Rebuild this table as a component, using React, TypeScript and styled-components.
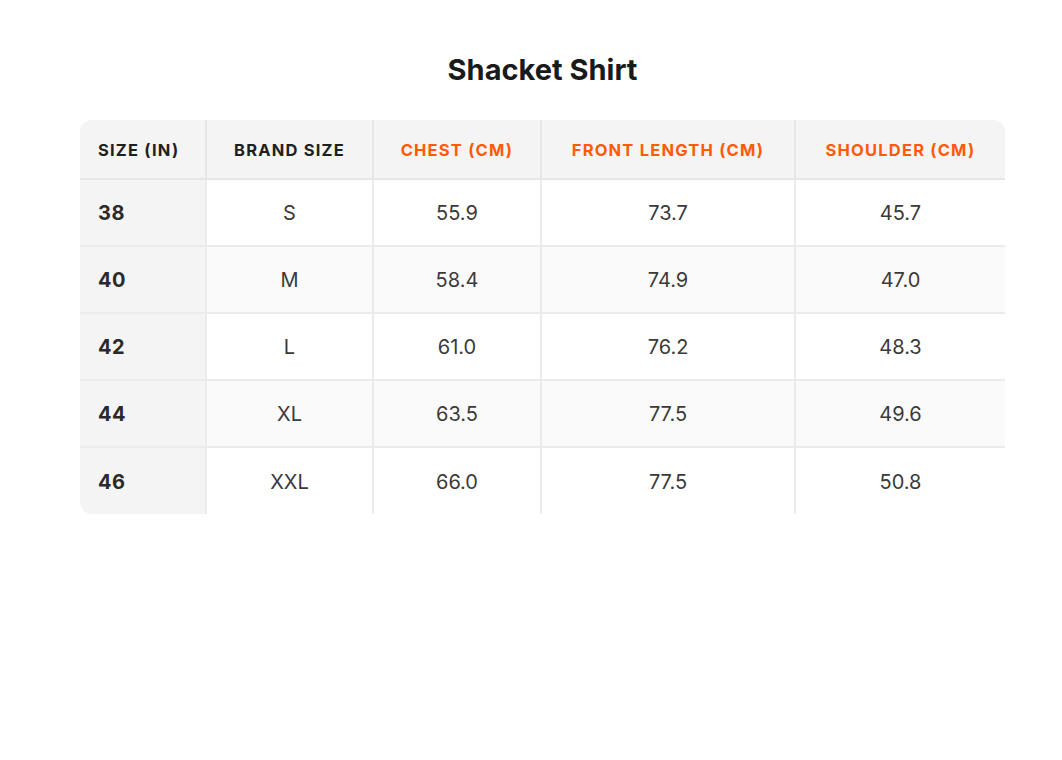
import React from 'react';
import styled, { createGlobalStyle } from 'styled-components';

const GlobalStyle = createGlobalStyle`
  body {
    margin: 0;
    background: #fff;
    font-family: Inter, "Liberation Sans", sans-serif;
  }
`;

const columns = [
  { label: 'Size (in)', accent: false },
  { label: 'Brand size', accent: false },
  { label: 'Chest (cm)', accent: true },
  { label: 'Front length (cm)', accent: true },
  { label: 'Shoulder (cm)', accent: true },
];

const rows = [
  ['38', 'S', '55.9', '73.7', '45.7'],
  ['40', 'M', '58.4', '74.9', '47.0'],
  ['42', 'L', '61.0', '76.2', '48.3'],
  ['44', 'XL', '63.5', '77.5', '49.6'],
  ['46', 'XXL', '66.0', '77.5', '50.8'],
];

const App = () => {
  return (
    <Page>
      <GlobalStyle />
      <Title>Shacket Shirt</Title>
      <Table>
        {columns.map((col, i) => (
          <HeadCell key={col.label} $accent={col.accent} $first={i === 0} $last={i === columns.length - 1}>
            {col.label}
          </HeadCell>
        ))}
        {rows.map((row, r) =>
          row.map((value, c) => (
            <Cell
              key={`${r}-${c}`}
              $first={c === 0}
              $last={c === row.length - 1}
              $lastRow={r === rows.length - 1}
              $striped={r % 2 === 1}
            >
              {value}
            </Cell>
          ))
        )}
      </Table>
    </Page>
  );
};

const Page = styled.div`
  display: flex;
  flex-direction: column;
  padding: 53px 57px 0 80px;
`;

const Title = styled.h1`
  margin: 0 0 33px;
  text-align: center;
  font-size: 29px;
  font-weight: 650;
  color: #1a1a1a;
  line-height: 34px;
  letter-spacing: 0;
`;

const Table = styled.div`
  display: grid;
  grid-template-columns: 127px 167px 168px 254px 209px;
  width: 925px;
  border-radius: 12px;
  overflow: hidden;
`;

const HeadCell = styled.div<{ $accent: boolean; $first: boolean; $last: boolean }>`
  box-sizing: border-box;
  display: flex;
  align-items: center;
  justify-content: ${(p) => (p.$first ? 'flex-start' : 'center')};
  height: 60px;
  padding: 1px ${(p) => (p.$first ? '18px' : '0')} 0;
  background: #f4f4f4;
  border-bottom: 2px solid #e6e6e6;
  border-right: ${(p) => (p.$last ? 'none' : '2px solid #e6e6e6')};
  font-size: 16.5px;
  font-weight: 650;
  letter-spacing: 1.2px;
  white-space: nowrap;
  text-transform: uppercase;
  color: ${(p) => (p.$accent ? '#ff5a0a' : '#1f1f1f')};
`;

const Cell = styled.div<{ $first: boolean; $last: boolean; $lastRow: boolean; $striped: boolean }>`
  box-sizing: border-box;
  display: flex;
  align-items: center;
  justify-content: ${(p) => (p.$first ? 'flex-start' : 'center')};
  height: ${(p) => (p.$lastRow ? '66px' : '67px')};
  padding: 1px ${(p) => (p.$first ? '18px' : '0')} 0;
  background: ${(p) => (p.$first ? '#f4f4f4' : p.$striped ? '#fafafa' : '#fff')};
  border-bottom: ${(p) => (p.$lastRow ? 'none' : '2px solid #ebebeb')};
  border-right: ${(p) => (p.$last ? 'none' : '2px solid #ebebeb')};
  font-size: 20px;
  font-weight: ${(p) => (p.$first ? 700 : 400)};
  letter-spacing: ${(p) => (p.$first ? '0.5px' : '0')};
  color: ${(p) => (p.$first ? '#2a2a2a' : '#3a3a3a')};
`;

export default App;
